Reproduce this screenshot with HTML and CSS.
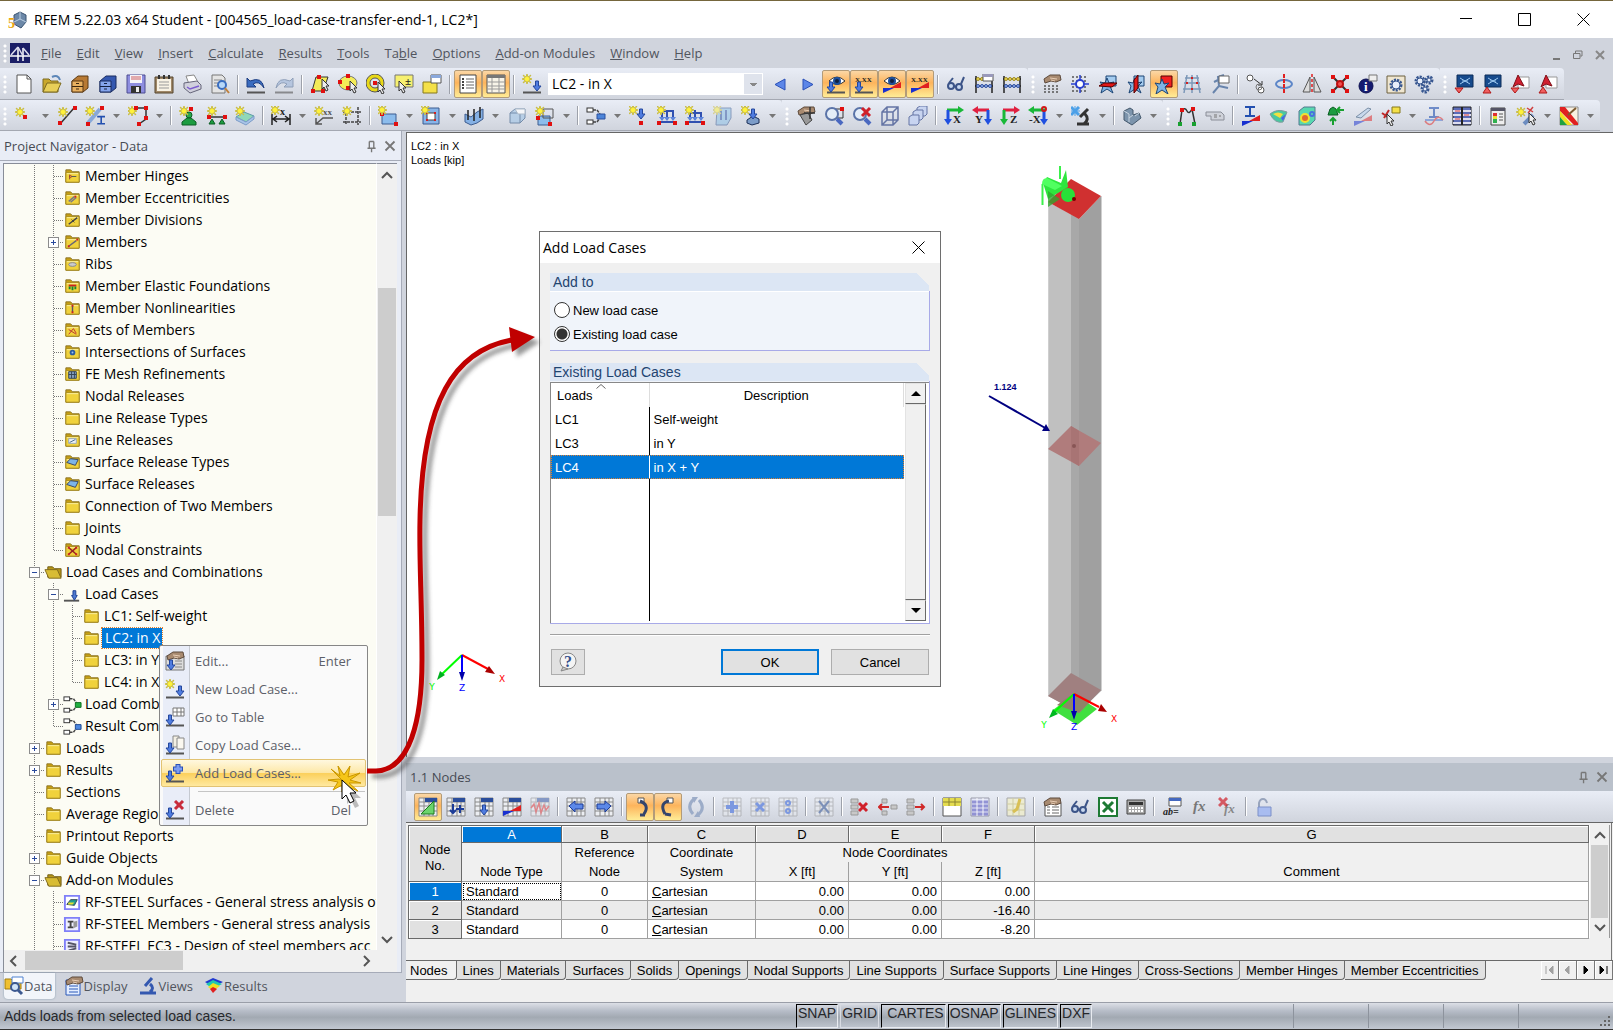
FILE: index.html
```html
<!DOCTYPE html>
<html lang="en">
<head>
  <meta charset="UTF-8">
  <meta name="viewport" content="width=device-width, initial-scale=1.0">
  <title>RFEM 5.22.03 x64 Student</title>
  <link rel="stylesheet" href="styles.css">
</head>
<body>
  <header class="title-bar">
    <span data-icon="app"></span>
    <h1>RFEM 5.22.03 x64 Student - [004565_load-case-transfer-end-1, LC2*]</h1>
    <div class="window-buttons">
      <button aria-label="Minimize"><svg width="12" height="12"><path d="M0 5.5H12" stroke="#000"/></svg></button>
      <button aria-label="Maximize"><svg width="13" height="13"><path d="M.5.5H12.500V12.500H.5Z" fill="none" stroke="#000"/></svg></button>
      <button aria-label="Close"><svg width="13" height="13"><path d="M.5.5 12.500 12.500M12.500.5.5 12.500" stroke="#000"/></svg></button>
    </div>
  </header>

  <nav class="menu-bar">
    <i class="grip"></i>
    <span data-icon="logo"></span>
    <button><u>F</u>ile</button>
    <button><u>E</u>dit</button>
    <button><u>V</u>iew</button>
    <button><u>I</u>nsert</button>
    <button><u>C</u>alculate</button>
    <button><u>R</u>esults</button>
    <button><u>T</u>ools</button>
    <button>Ta<u>b</u>le</button>
    <button><u>O</u>ptions</button>
    <button><u>A</u>dd-on Modules</button>
    <button><u>W</u>indow</button>
    <button><u>H</u>elp</button>
    <div class="mdi-buttons">
      <button aria-label="Minimize drawing"><svg width="8" height="12"><path d="M0 10H7" stroke="#777" stroke-width="2"/></svg></button>
      <button aria-label="Restore drawing"><svg width="10" height="10"><path d="M2.500 3V1H9V6H7.500M.5 3.500H7V8.500H.5Z" fill="none" stroke="#777"/></svg></button>
      <button aria-label="Close drawing"><svg width="10" height="10"><path d="M1 1 9 9M9 1 1 9" stroke="#888" stroke-width="2"/></svg></button>
    </div>
  </nav>

  <!-- "|" separator, "*" pressed, "+" has a drop-down arrow -->
  <div class="toolbar-row">
    <div class="toolbar" data-buttons="new open cabinetBrown cabinetBlue save clipboard print preview | undo redo | pickPlane pickEllipse pickRing pickBox pickWindow | *navigator *tables | newLoad">
      <select class="load-case" aria-label="Load case"><option>LC2 - in X</option></select>
      <div class="more" data-buttons="prev next *eyeLoad *xxLoad *eyeResult *xxResult | glasses abacusWindow abacus"></div>
    </div>
    <div class="toolbar" data-buttons="handGrid snapGrid planeXY planeYZ *planeXZ gridLines tree3d | copyMove rotate mirror nodeCross info gearBox gears"></div>
    <div class="toolbar" data-buttons="dlubalDown dlubalUp pdfDown pdfUp"></div>
  </div>
  <div class="toolbar-row">
    <div class="toolbar" data-buttons="+newNode newLine +newMember +newPolyline | newSupport newLineSupport newFoundation | +dimension comment guideFrame | +newSurface +opening +surfaceLoad solid +newSolid | +combine nodeLoad memberLoad lineLoad areaLoad +freeLoad"></div>
    <div class="toolbar" data-buttons="handMove zoomWindow zoomOff wireBox boxes | viewX viewY viewZ +viewMinusX +microscope | +render"></div>
    <div class="toolbar" data-buttons="deformed print3d | sectionResult surfaceResult solidResult supportForce sectionCut +pickValue momentLine valueTable | legend +wizard +colors"></div>
  </div>

  <main class="workspace">
    <aside class="navigator">
      <div class="pane-title">
        <h2>Project Navigator - Data</h2>
        <button aria-label="Pin" data-icon="pin"></button>
        <button aria-label="Close navigator" data-icon="close"></button>
      </div>
      <div class="tree-box">
        <ul class="tree" id="tree"></ul>
        <div class="scroll-v">
          <i data-icon="up"></i><div class="thumb"></div><i data-icon="down"></i>
        </div>
        <div class="scroll-h">
          <i data-icon="left"></i><div class="thumb"></div><i data-icon="right"></i>
        </div>
      </div>
      <div class="navigator-tabs">
        <button class="selected"><span data-icon="tabData"></span>Data</button>
        <button><span data-icon="tabDisplay"></span>Display</button>
        <button><span data-icon="tabViews"></span>Views</button>
        <button><span data-icon="tabResults"></span>Results</button>
      </div>
    </aside>

    <div class="right-side">
      <section class="viewport">
        <p>LC2 : in X<br>Loads [kip]</p>
        <svg class="model" width="100%" height="100%">
          <!-- base support -->
          <path d="M646 577 667 561 690 576 670 592Z" fill="#3fe03f"/>
          <!-- column -->
          <path d="M641 69V563L672 579V85Z" fill="#c0c0c0"/>
          <path d="M664 60H672V579L664 574Z" fill="#a8a8a8"/>
          <path d="M672 86 694 63V558L672 579Z" fill="#a0a0a0"/>
          <path d="M641.500 69V563M694.500 63V558" stroke="#cfcfcf"/>
          <path d="M641 69 664 46 694 63 672 86Z" fill="#d03030"/>
          <path d="M641 316 664 293 694 310 672 333Z" fill="#b07c7c"/>
          <path d="M664 293 672 298V333L664 328Z" fill="#a87474"/>
          <path d="M641 563 664 540 694 557 672 580Z" fill="#a08080"/>
          <path d="M650 572 667 560 684 568 672 580Z" fill="#8f8468"/>
          <circle cx="667" cy="313" r="2" fill="#855"/>
          <!-- hinge at the top -->
          <path d="M635.500 72V51M653 46V33" stroke="#3bf04b" stroke-width="2"/>
          <path d="M636 50 640 44 654 50 659 37 661 54 641 66Z" fill="#2ee63e"/>
          <path d="M641 58V74L653 66Z" fill="#30a830" opacity=".8"/>
          <path d="M640 45Q635 45 635 51L648 57 655 53Z" fill="#50ff60"/>
          <circle cx="661" cy="62" r="7" fill="#28e038"/>
          <circle cx="667" cy="66" r="2" fill="#700"/>
          <!-- local axes at the base -->
          <path d="M667 561 645 581" stroke="#0f0" stroke-width="2"/>
          <path d="M642 585 646 576 651 581Z" fill="#00b820"/>
          <path d="M667 561 692 574" stroke="red" stroke-width="2"/>
          <path d="M700 579 691 578 694 571Z" fill="#a00"/>
          <path d="M667 561V580" stroke="#00f" stroke-width="2"/>
          <path d="M664 578H670L667 587Z" fill="#00a"/>
          <!-- load -->
          <path d="M582 263 640 296" stroke="#000080" stroke-width="2"/>
          <path d="M643 298 635 298 639 291Z" fill="#000080"/>
          <text class="load-value" x="587" y="257">1.124</text>
          <!-- global axes -->
          <path d="M55 522 34 542" stroke="#0f0" stroke-width="2"/>
          <path d="M30 547 33 538 38 542Z" fill="#00b020"/>
          <path d="M55 522 81 536" stroke="red" stroke-width="2"/>
          <path d="M88 541 78 539 82 533Z" fill="#a00"/>
          <path d="M55 522V541" stroke="#00f" stroke-width="2"/>
          <path d="M52 539H58L55 548Z" fill="#00a"/>
          <g class="axis-label">
            <text x="95" y="549" fill="red">X</text>
            <text x="25" y="557" fill="#0f0">Y</text>
            <text x="55" y="558" fill="#00f">Z</text>
            <text x="707" y="589" fill="red">X</text>
            <text x="637" y="595" fill="#0f0">Y</text>
            <text x="667" y="597" fill="#00f">Z</text>
          </g>
        </svg>
      </section>

      <section class="table-pane">
        <div class="pane-title">
          <h2>1.1 Nodes</h2>
          <button aria-label="Pin" data-icon="pin"></button>
          <button aria-label="Close table" data-icon="close"></button>
        </div>
        <div class="toolbar" data-buttons="*gridEdit gridLoad gridDown gridResult gridWave | gridLeft gridRight | *jumpDown *jumpUp refresh | gridPlus gridTimes gridDots | gridX | rowDelete rowInsert rowOut | gridYellow gridBlue | gridNote | handList glasses excel calculator | abWindow fx fxDelete | lock"></div>
        <div class="sheet">
          <table>
            <colgroup>
              <col class="col-no"><col class="col-a"><col class="col-b"><col class="col-c">
              <col class="col-xyz"><col class="col-xyz"><col class="col-xyz"><col>
            </colgroup>
            <thead>
              <tr class="letters">
                <th rowspan="3" class="corner">Node<br>No.</th>
                <th class="active">A</th><th>B</th><th>C</th><th>D</th><th>E</th><th>F</th><th>G</th>
              </tr>
              <tr class="names">
                <th></th><th>Reference</th><th>Coordinate</th><th colspan="3">Node Coordinates</th><th></th>
              </tr>
              <tr class="names last">
                <th>Node Type</th><th>Node</th><th>System</th><th>X [ft]</th><th>Y [ft]</th><th>Z [ft]</th><th>Comment</th>
              </tr>
            </thead>
            <tbody>
              <tr><th class="active">1</th><td class="focus">Standard</td><td class="mid">0</td><td><u>C</u>artesian</td><td class="num">0.00</td><td class="num">0.00</td><td class="num">0.00</td><td></td></tr>
              <tr><th>2</th><td>Standard</td><td class="mid">0</td><td><u>C</u>artesian</td><td class="num">0.00</td><td class="num">0.00</td><td class="num">-16.40</td><td></td></tr>
              <tr><th>3</th><td>Standard</td><td class="mid">0</td><td><u>C</u>artesian</td><td class="num">0.00</td><td class="num">0.00</td><td class="num">-8.20</td><td></td></tr>
            </tbody>
          </table>
          <div class="scroll-v">
            <i data-icon="up"></i><div class="thumb"></div><i data-icon="down"></i>
          </div>
        </div>
        <div class="sheet-tabs">
          <button class="selected">Nodes</button>
          <button>Lines</button>
          <button>Materials</button>
          <button>Surfaces</button>
          <button>Solids</button>
          <button>Openings</button>
          <button>Nodal Supports</button>
          <button>Line Supports</button>
          <button>Surface Supports</button>
          <button>Line Hinges</button>
          <button>Cross-Sections</button>
          <button>Member Hinges</button>
          <button>Member Eccentricities</button>
          <div class="tab-arrows">
            <button aria-label="First tab" disabled><svg width="9" height="8"><path d="M1 0V8M8 0V8L4 4Z"/></svg></button>
            <button aria-label="Previous tab" disabled><svg width="9" height="8"><path d="M6 0V8L2 4Z"/></svg></button>
            <button aria-label="Next tab"><svg width="9" height="8"><path d="M3 0V8L7 4Z"/></svg></button>
            <button aria-label="Last tab"><svg width="9" height="8"><path d="M8 0V8M1 0V8L5 4Z"/></svg></button>
          </div>
        </div>
      </section>
    </div>
  </main>

  <footer class="status-bar">
    <span class="hint">Adds loads from selected load cases.</span>
    <div class="modes">
      <button>SNAP</button>
      <button class="off">GRID</button>
      <button class="wide">CARTES</button>
      <button>OSNAP</button>
      <button>GLINES</button>
      <button>DXF</button>
    </div>
    <div class="cells"><i></i><i></i><i></i><i></i></div>
    <svg class="resize" width="12" height="12"><path d="M9 1h2M5 5h2M9 5h2M1 9h2M5 9h2M9 9h2" stroke="#666" stroke-width="2"/></svg>
  </footer>

  <div class="dialog" role="dialog" aria-labelledby="dialog-title">
    <div class="dialog-title">
      <h2 id="dialog-title">Add Load Cases</h2>
      <button aria-label="Close"><svg width="13" height="13"><path d="M.5.5 12.500 12.500M12.500.5.5 12.500" stroke="#000"/></svg></button>
    </div>
    <div class="dialog-body">
      <section class="group">
        <h3>Add to</h3>
        <div class="radios">
          <label><input type="radio" name="target">New load case</label>
          <label><input type="radio" name="target" checked>Existing load case</label>
        </div>
      </section>
      <section class="group">
        <h3>Existing Load Cases</h3>
        <div class="case-list">
          <div class="case-table">
            <table>
              <thead><tr><th>Loads<svg width="10" height="5"><path d="M.5 4.500 5 .5 9.500 4.500" fill="none" stroke="#666"/></svg></th><th>Description</th></tr></thead>
              <tbody>
                <tr><td>LC1</td><td>Self-weight</td></tr>
                <tr><td>LC3</td><td>in Y</td></tr>
                <tr class="selected"><td>LC4</td><td>in X + Y</td></tr>
                <tr class="rest"><td></td><td></td></tr>
              </tbody>
            </table>
          </div>
          <div class="scroll-classic">
            <button aria-label="Scroll up"><svg width="10" height="5"><path d="M0 5 5 0 10 5Z"/></svg></button>
            <div class="thumb"></div>
            <button aria-label="Scroll down"><svg width="10" height="5"><path d="M0 0H10L5 5Z"/></svg></button>
          </div>
        </div>
      </section>
      <div class="dialog-buttons">
        <button class="help" aria-label="Help" data-icon="help"></button>
        <button class="default">OK</button>
        <button>Cancel</button>
      </div>
    </div>
  </div>

  <div class="context-menu" role="menu">
    <button role="menuitem"><span data-icon="menuEdit"></span>Edit...<kbd>Enter</kbd></button>
    <button role="menuitem"><span data-icon="newLoad"></span>New Load Case...</button>
    <button role="menuitem"><span data-icon="menuTable"></span>Go to Table</button>
    <button role="menuitem"><span data-icon="menuCopy"></span>Copy Load Case...</button>
    <button role="menuitem" class="hover"><span data-icon="menuAdd"></span>Add Load Cases...</button>
    <hr>
    <button role="menuitem"><span data-icon="menuDelete"></span>Delete<kbd>Del</kbd></button>
    <svg class="pointer" width="46" height="46">
      <path d="M15 16 3 4 12 11 10 1 16 10 22 1 20 12 32 8 22 15 33 18 21 18 30 26 18 21 14 27 14 20 5 25 10 17 0 15 11 14Z" fill="#f5c518" stroke="#c99700"/>
      <path d="M17 18V37L21 33 25 41 29 39 25 31H31Z" fill="#000" opacity=".25" transform="translate(2 2)"/>
      <path d="M14 15V34L18 30 22 38 26 36 22 28H28Z" fill="#fff" stroke="#000"/>
    </svg>
  </div>

  <svg class="callout" width="100%" height="100%">
    <defs><filter id="soft"><feGaussianBlur stdDeviation="2"/></filter></defs>
    <g transform="translate(5 5)" opacity=".5" filter="url(#soft)">
      <path d="M367 771H376C410 770 422 720 422 660C422 600 419 560 420 520C422 400 455 350 512 340" fill="none" stroke="#333" stroke-width="5"/>
      <path d="M509 327 535 337 512 352Z" fill="#333"/>
    </g>
    <path d="M367 771H376C410 770 422 720 422 660C422 600 419 560 420 520C422 400 455 350 512 340" fill="none" stroke="#c00000" stroke-width="5"/>
    <path d="M509 327 535 337 512 352Z" fill="#c00000"/>
  </svg>

  <script src="script.js"></script>
</body>
</html>
```
FILE: styles.css
```css
* {
  box-sizing: border-box;
}
body {
  margin: 0;
  height: 100vh;
  display: flex;
  flex-direction: column;
  overflow: hidden;
  position: relative;
  background: #d0d4dd;
  color: #000;
  font-family: "Open Sans", "Noto Sans", sans-serif;
  font-size: 14px;
}
button {
  padding: 0;
  border: none;
  background: none;
  color: inherit;
  font: inherit;
}
h1, h2, h3, p, ul {
  margin: 0;
  padding: 0;
  font-size: 14px;
  font-weight: normal;
}
svg {
  display: block;
}
[data-icon] {
  display: block;
  flex: none;
}

/* title and menu */
.title-bar {
  flex: none;
  height: 38px;
  display: flex;
  align-items: center;
  gap: 6px;
  padding-left: 8px;
  border-top: 1px solid #75663c;
  background: #fff;
}
.window-buttons {
  display: flex;
  margin-left: auto;
}
.window-buttons button {
  width: 59px;
  display: flex;
  justify-content: center;
}
.menu-bar {
  flex: none;
  height: 30px;
  display: flex;
  align-items: center;
  gap: 15px;
  padding-bottom: 1px;
  color: #51555e;
  font-size: 13px;
}
.menu-bar .grip {
  margin-right: -15px;
}
.menu-bar > [data-icon] {
  margin-right: -4px;
}
.mdi-buttons {
  display: flex;
  align-items: center;
  gap: 12px;
  margin: 4px 8px 0 auto;
}

/* toolbars */
.toolbar-row {
  flex: none;
  display: flex;
}
.toolbar {
  display: flex;
  align-items: center;
  height: 32px;
  padding: 1px 2px 0 0;
  border-bottom: 1px solid #a4a8b2;
  border-radius: 0 4px 0 0;
  background: linear-gradient(#e9edf6, #d0d4dd);
}
.toolbar-row + .toolbar-row .toolbar {
  height: 31px;
}
.more {
  display: flex;
  align-items: center;
}
.grip {
  width: 10px;
  height: 20px;
  flex: none;
  background: radial-gradient(circle at 5px 3px, #fff 1px, transparent 2px) 0 0 / 10px 5px;
}
.tool {
  width: 28px;
  height: 28px;
  flex: none;
  display: flex;
  align-items: center;
  justify-content: center;
  border: 1px solid transparent;
  border-radius: 2px;
}
.tool.pressed {
  border-color: #b39b78;
  background: linear-gradient(#fbd7a6, #fdb45c 45%, #ffec96);
}
.drop {
  width: 15px;
  height: 28px;
  flex: none;
  display: flex;
  align-items: center;
  justify-content: center;
}
.separator {
  width: 2px;
  height: 19px;
  flex: none;
  margin: 0 3px;
  border-left: 1px solid #9da1aa;
  background: #fff;
}
.load-case {
  width: 215px;
  height: 22px;
  margin: 0 3px 0 2px;
  padding: 0 3px;
  appearance: none;
  border: 1px solid #fff;
  border-radius: 0;
  color: #000;
  font: inherit;
  line-height: 20px;
  background:
    linear-gradient(#888, #888) right 5px top 9px / 7px 1px no-repeat,
    linear-gradient(#888, #888) right 6px top 10px / 5px 1px no-repeat,
    linear-gradient(#888, #888) right 7px top 11px / 3px 1px no-repeat,
    linear-gradient(#dfe3ec, #dfe3ec) right / 18px 100% no-repeat,
    #fff;
}

/* panes */
.workspace {
  flex: 1;
  min-height: 0;
  display: flex;
}
.pane-title {
  flex: none;
  height: 30px;
  display: flex;
  align-items: center;
  padding: 0 2px 0 4px;
  color: #474b54;
}
.pane-title h2 {
  flex: 1;
  font-size: 13px;
}
.pane-title svg {
  width: 18px;
  height: 18px;
}
.navigator {
  width: 402px;
  flex: none;
  display: flex;
  flex-direction: column;
  background: #d0d4dd;
}
.navigator .pane-title {
  border-right: 1px solid #a6abb8;
  border-bottom: 1px solid #a6abb8;
  background: #e9edf6;
}
.tree-box {
  flex: 1;
  min-height: 0;
  display: grid;
  grid-template-columns: 1fr 21px;
  grid-template-rows: 1fr 22px;
  padding: 2px 4px 0 3px;
  border: 1px solid #a6abb8;
  border-width: 0 1px 1px 0;
  background: #e9edf6;
}
.tree {
  overflow: hidden;
  padding: 1px 0 0 21px;
  border-top: 1px solid #888d98;
  border-left: 1px solid #888d98;
  background: #fcfcf4;
  list-style: none;
}
.tree li {
  height: 22px;
  display: flex;
  align-items: center;
  white-space: nowrap;
}
.tree svg {
  flex: none;
}
.tree .label {
  padding: 0 2px 0 3px;
  line-height: 20px;
}
.tree .selected {
  margin-left: 1px;
  outline: 1px dotted #e08030;
  background: #0078d7;
  color: #fff;
}
.scroll-v {
  display: flex;
  flex-direction: column;
  align-items: center;
  padding: 0 1px;
  border-left: 1px solid #fff;
  background: #f0f0f0;
}
.scroll-v .thumb {
  width: 100%;
  background: #cdcdcd;
}
.tree-box .scroll-v {
  padding-top: 1px;
  border-top: 1px solid #888d98;
}
.tree-box .scroll-v .thumb {
  height: 29%;
  margin: 103px 0 auto;
}
.scroll-h {
  grid-column: 1 / 3;
  display: flex;
  align-items: flex-start;
  padding: 1px 21px 2px 0;
  border-left: 1px solid #888d98;
  background: #f0f0f0;
}
.scroll-h .thumb {
  width: 158px;
  height: 19px;
  margin: 0 auto 0 1px;
  background: #cdcdcd;
}
.navigator-tabs {
  flex: none;
  height: 29px;
  display: flex;
  align-items: center;
  gap: 9px;
  padding: 0 4px 3px;
  color: #51555e;
  font-size: 13px;
}
.navigator-tabs button {
  height: 26px;
  display: flex;
  align-items: center;
  padding-right: 2px;
}
.navigator-tabs .selected {
  border-radius: 0 0 4px 4px;
  background: #f2f5fa;
  box-shadow: 0 0 2px #7f96a8;
}
.right-side {
  flex: 1;
  min-width: 0;
  display: flex;
  flex-direction: column;
  margin-left: 4px;
}
.viewport {
  flex: 1;
  min-height: 0;
  position: relative;
  margin-top: 1px;
  border: 1px solid #666;
  border-width: 1px 0 0 1px;
  background: #fff;
}
.viewport p {
  padding: 6px 4px;
  font: 11px/14px "Liberation Sans", Arial, sans-serif;
}
.model {
  position: absolute;
  left: 0;
  top: 0;
}
.load-value {
  font: bold 9px "Liberation Sans", sans-serif;
  fill: #000080;
}
.axis-label {
  font: 9px "DejaVu Sans", sans-serif;
  text-anchor: middle;
}

/* table pane */
.table-pane {
  flex: none;
  height: 245px;
  display: flex;
  flex-direction: column;
  border-top: 6px solid #d0d4dd;
  background: #f0f0f0;
  font-family: "Liberation Sans", Arial, sans-serif;
  font-size: 13px;
}
.table-pane .pane-title {
  height: 28px;
  background: #bac1cb;
  font-family: "Open Sans", "Noto Sans", sans-serif;
}
.table-pane .toolbar {
  padding: 0 0 0 8px;
  border-bottom: 1px solid #666;
  border-radius: 0;
}
.table-pane .toolbar .grip {
  display: none;
}
.sheet {
  flex: 1;
  display: flex;
  align-items: flex-start;
  margin: 0 1px;
  padding: 2px 1px;
  border-right: 1px solid #777;
}
.sheet table {
  flex: 1;
  min-width: 0;
  table-layout: fixed;
  border-collapse: collapse;
  line-height: 15px;
}
.col-no { width: 53px; }
.col-a { width: 100px; }
.col-b { width: 86px; }
.col-c { width: 108px; }
.col-xyz { width: 93px; }
.sheet th,
.sheet td {
  padding: 0 4px;
  border: 1px solid #a0a0a0;
  font-weight: normal;
}
.sheet td {
  height: 19px;
  background: #fff;
}
.sheet tr:nth-child(2) td {
  background: #ebebeb;
}
.sheet tbody th,
.letters th {
  border: 1px solid #696969;
  background: #e1e1e1;
  box-shadow: inset 1px 1px #fff;
}
.letters th {
  height: 17px;
}
.sheet .corner {
  padding-top: 8px;
  line-height: 16px;
}
.sheet th.active {
  background: #0078d7;
  color: #fff;
}
.names th {
  height: 19px;
  border-top: none;
  border-bottom: none;
}
.names.last th {
  height: 20px;
  border-bottom: 1px solid #a0a0a0;
}
.sheet .focus {
  outline: 1px dotted #000;
  outline-offset: -2px;
}
.mid {
  text-align: center;
}
.num {
  text-align: right;
}
.sheet .scroll-v {
  width: 21px;
  height: 113px;
  border-right: 1px solid #999;
}
.sheet .scroll-v .thumb {
  flex: 1;
}
.sheet-tabs {
  flex: none;
  height: 42px;
  display: flex;
  align-items: flex-start;
  border-top: 1px solid #696969;
}
.sheet-tabs > button {
  height: 19px;
  padding: 0 6px;
  border: 1px solid #696969;
  border-width: 0 1px 1px 0;
  border-radius: 0 0 4px 0;
  background: #e1e1e1;
  white-space: nowrap;
}
.sheet-tabs > .selected {
  padding: 0 8px 0 4px;
  background: #f0f0f0;
}
.tab-arrows {
  display: flex;
  margin-left: auto;
}
.tab-arrows button {
  width: 18px;
  height: 19px;
  display: flex;
  align-items: center;
  justify-content: center;
  border: 1px solid #777;
  border-width: 0 1px 1px 0;
  box-shadow: inset 1px 1px #fff;
}
.tab-arrows path {
  fill: #000;
  stroke: #000;
}
.tab-arrows :disabled path {
  fill: #a0a0a0;
  stroke: #a0a0a0;
}

/* status bar */
.status-bar {
  flex: none;
  height: 28px;
  display: flex;
  align-items: center;
  position: relative;
  padding-left: 4px;
  border-top: 1px solid #9a9ea8;
  border-bottom: 1px solid #333;
  background: linear-gradient(#dcdfe6, #b7bdc8 30%, #a2a9b2 55%, #c2c8d2);
  color: #26282c;
  font-family: "Liberation Sans", Arial, sans-serif;
}
.hint {
  width: 792px;
}
.modes {
  display: flex;
  gap: 2px;
  height: 24px;
}
.modes button {
  padding: 0 1px 6px;
  border: 1px solid #000;
  border-color: #000 #e8ebf0 #e8ebf0 #000;
}
.modes .off {
  border-color: #d8dbe2;
}
.modes .wide {
  padding-left: 5px;
}
.cells {
  flex: 1;
  height: 24px;
  display: flex;
  justify-content: flex-end;
  padding-right: 20px;
}
.cells i {
  width: 75px;
  border-left: 1px solid #8d939d;
}
.resize {
  position: absolute;
  right: 2px;
  bottom: 1px;
}

/* dialog */
.dialog {
  position: absolute;
  left: 539px;
  top: 231px;
  width: 402px;
  border: 1px solid #6e6e6e;
  background: #f0f0f0;
  font: 13px "Liberation Sans", Arial, sans-serif;
}
.dialog-title {
  height: 31px;
  display: flex;
  align-items: center;
  justify-content: space-between;
  padding: 0 15px 0 3px;
  background: #fff;
  font-family: "Open Sans", "Noto Sans", sans-serif;
}
.dialog-body {
  padding: 10px;
}
.group {
  margin-bottom: 12px;
  border-right: 1px solid #a8aae8;
  border-bottom: 1px solid #a8aae8;
  background: #f0f4fa;
}
.group h3 {
  height: 18px;
  padding-left: 3px;
  margin-right: -1px;
  border-right: 1px solid #f0f0f0;
  background: linear-gradient(225deg, #f0f0f0 9px, #dce6f4 9px);
  color: #1f4470;
  line-height: 18px;
}
.radios {
  padding: 6px 4px 4px;
  border-top: 1px solid #fff;
}
.radios label {
  height: 24px;
  display: flex;
  align-items: center;
  gap: 3px;
}
.radios input {
  width: 16px;
  height: 16px;
  margin: 0;
  appearance: none;
  border: 1px solid #333;
  border-radius: 50%;
  background: #fff;
}
.radios input:checked {
  background: radial-gradient(circle, #333 5px, #fff 6px);
}
.case-list {
  height: 241px;
  display: flex;
  justify-content: space-between;
  margin-top: 1px;
  padding: 0 3px 2px 0;
  border-top: 1px solid #888;
  border-left: 1px solid #888;
  background: #fff;
}
.case-table {
  flex: 1;
  display: flex;
}
.case-table table {
  width: 100%;
  height: 100%;
  table-layout: fixed;
  border-collapse: collapse;
}
.case-table th {
  position: relative;
  height: 24px;
  padding: 0;
  border-right: 1px solid #ddd;
  font-weight: normal;
}
.case-table th:first-child {
  width: 98px;
  padding-left: 6px;
  text-align: left;
}
.case-table th svg {
  position: absolute;
  left: 45px;
  top: 1px;
}
.case-table td {
  height: 24px;
  padding: 0 4px;
}
.case-table td:first-child {
  border-right: 1px solid #000;
}
.case-table .selected {
  outline: 1px dotted #e08030;
  outline-offset: -1px;
  background: #0078d7;
  color: #fff;
}
.case-table .selected td:first-child {
  border-color: #fff;
}
.case-table .rest td {
  height: auto;
}
.scroll-classic {
  width: 21px;
  display: flex;
  flex-direction: column;
  margin-left: 1px;
}
.scroll-classic .thumb {
  flex: 1;
}
.scroll-classic button {
  height: 21px;
  display: flex;
  align-items: center;
  justify-content: center;
}
.scroll-classic button,
.scroll-classic .thumb {
  border: 1px solid #777;
  border-color: #e3e3e3 #696969 #696969 #e3e3e3;
  background: #f0f0f0;
}
.dialog-buttons {
  display: flex;
  gap: 12px;
  margin-top: -2px;
  padding: 14px 1px 1px;
  border-top: 1px solid #a0a0a0;
  box-shadow: inset 0 1px #fff;
}
.dialog-buttons button {
  width: 98px;
  height: 26px;
  border: 1px solid #adadad;
  background: #e1e1e1;
}
.dialog-buttons .default {
  border: 2px solid #0078d7;
}
.dialog-buttons .help {
  width: 34px;
  display: flex;
  align-items: center;
  justify-content: center;
  margin-right: auto;
}

/* context menu */
.context-menu {
  position: absolute;
  left: 159px;
  top: 645px;
  width: 209px;
  padding: 1px;
  border: 1px solid #868686;
  border-radius: 2px;
  background: linear-gradient(90deg, #fafafa 3px, #e9edf8 3px, #e9edf8 29px, #c5c9d1 29px, #c5c9d1 30px, #fafafa 30px);
  color: #5c6069;
  font-size: 13px;
}
.context-menu > button {
  width: 100%;
  height: 28px;
  display: flex;
  align-items: center;
  gap: 10px;
  padding: 0 14px 0 3px;
  border: 1px solid transparent;
  border-radius: 2px;
}
.context-menu .hover {
  border-color: #e2c373;
  background: linear-gradient(#fff8e0, #fde8a8 48%, #fbd05c 52%, #ffe9a0);
}
.context-menu kbd {
  margin-left: auto;
  font: inherit;
}
.context-menu hr {
  height: 1px;
  margin: 4px 1px 4px 37px;
  border: none;
  background: #c5c5c5;
}
.pointer {
  position: absolute;
  left: 168px;
  top: 119px;
}
.callout {
  position: absolute;
  left: 0;
  top: 0;
  pointer-events: none;
}
```
FILE: script.js
```js
// Small pieces that many icons share
const at = (x, y, body) => `<g transform="translate(${x} ${y})">${body}</g>`;
const line = (d, color = "#333", width = 1.5) => `<path d="${d}" fill="none" stroke="${color}" stroke-width="${width}"/>`;
const shape = (d, fill, stroke = "none") => `<path d="${d}" fill="${fill}" stroke="${stroke}"/>`;
const star = (x, y) => at(x, y, shape("M0-5 1-2 4-4 2-1 5 0 2 1 4 4 1 2 0 5-1 2-4 4-2 1-5 0-2-1-4-4-1-2Z", "#fff23a", "#c9bd48"));
const dot = (x, y, c = "#e01010") => `<rect x="${x - 2}" y="${y - 2}" width="4" height="4" fill="${c}"/>`;
const mark = (x, y) => `<rect x="${x - 1}" y="${y - 1}" width="2" height="2" fill="#d02020"/>`;
const ring = (x, y, r, c, w = 1.5, fill = "none") => `<circle cx="${x}" cy="${y}" r="${r}" fill="${fill}" stroke="${c}" stroke-width="${w}"/>`;
const text = (x, y, s, size = 9, c = "#222", style = "") => `<text x="${x}" y="${y}" font-family="Liberation Serif" font-weight="bold" font-size="${size}" fill="${c}" ${style}>${s}</text>`;
const arrowDown = (x, y) => at(x, y, shape("M-1.500-9H1.500V-4H4L0 1-4-4H-1.500Z", "#4f7ce0", "#24479c"));
const pointer = (x, y) => at(x, y, shape("M0 0V10L2 8 4 12 6 11 4 7H7Z", "#eee", "#333"));
const hand = shape("M2 5 8 1 18 1 19 6 14 8 9 7 3 9Z", "#a88a70", "#5d4a3c") + line("M8 4 15 5M9 6 13 7", "#e8cdb4", 1);
const grid = shape("M1 1H19V19H1Z", "#eceef2") + line("M1 1H19V19H1ZM1 5H19M1 9H19M1 14H19M6 1V19M11 1V19M15 1V19", "#888", 1);
const gridTop = grid + shape("M7 1H19V5H7Z", "#2a4d9c");
const cross = (x, y, c = "#d0202a") => at(x, y, line("M-4-4 4 4M4-4-4 4", c, 3));
const base = line("M1 18.500H19", "#555", 2);
const slope = shape("M1 13H12L1 18Z", "#1830d0") + shape("M8 13H19V7Z", "#e02020");
const eye = shape("M2 6Q10-2 18 6Q10 13 2 6Z", "#fff", "#333") + ring(10, 6, 3, "#1c4f9c", 2, "#102040");
const cube = shape("M3 7 8 3H18V12L13 17H3Z", "#a9c8e6", "#4a6a90") + line("M3 7H13V17M13 7 18 3", "#4a6a90", 1);
const lens = ring(8, 8, 6, "#5a73a8", 2, "#e4edf8") + line("M13 13 18 18", "#4a68c0", 4);
const ibeam = line("M4 2H14M4 11H14M9 2V11", "#2350b0", 2);
const star4 = shape("M3 7 8 8 10 3 12 8 17 7 13 11 16 18 10 14 4 18 6 11Z", "#7fb4e4", "#1c4474");
const plane = shape("M8 2H18V12H8Z", "#a4ccf0", "#1c4474") + at(-1, 1, star4);
const abacus = line("M2 19V2M18 19V2M1 5H19M1 12H19", "#222", 1.5) + [4, 8, 12, 16].map(x => ring(x, 5, 1.5, "#a08c20", 1, "#f3e060") + ring(x, 12, 1.5, "#3050a0", 1, "#90b0f0")).join("");
const combineLines = line("M7 4H11L14 8M7 16H11L14 12", "#444", "1.5\" stroke-dasharray=\"3 1") + `<rect x="1" y="2" width="6" height="4" fill="#fff" stroke="#333"/><rect x="1" y="14" width="6" height="4" fill="#fff" stroke="#333"/>`;
const view = (name, h, v, x, tx) => line("M3 4H17", h, 3) + line(`M${x} 4V16`, v, 3) + shape(`M${x - 4} 13H${x + 4}L${x} 19Z`, v) + (x < 10 ? shape("M14 0V8L20 4Z", h) : shape("M6 0V8L0 4Z", h)) + text(tx, 17, name, 11);
const gear = (x, y, r) => `<circle cx="${x}" cy="${y}" r="${r}" fill="#c8d6f0" stroke="#37568f" stroke-width="3" stroke-dasharray="2 1"/><circle cx="${x}" cy="${y}" r="${r - 1}" fill="#e8eefa" stroke="#37568f"/>`;
const screen = shape("M3 1H19V13H3Z", "#164a8c", "#0c2c58") + line("M6 4 16 10M16 4 6 10M8 7H14", "#9cc8f0", 1);
const pdf = shape("M8 3H19V14H8Z", "#fff", "#999") + shape("M8 1 3 13 8 10 14 12Z", "#d02030", "#801018");
const gridFaded = `<g opacity=".45">${grid}</g>`;
const rows = shape("M1 2H8V6H1ZM1 8H8V12H1ZM1 14H8V18H1Z", "#c8c8c8", "#999");

const icons = {
  app: shape("M6 5 12 2 18 5V12L13 18 6 14Z", "#6c88a8", "#3a5472") + line("M12 2V9L6 12M12 9 18 12", "#bcd0e4", 1) + text(0, 18, "5", 14, "#e8a810"),
  logo: shape("M0 0H20V20H0Z", "#1b1e66") + line("M0 13H20M8 4V18M13 5V18", "#fff", 1.5) + line("M8 4 1 12M8 4 13 13M13 5 19 12", "#dde", 1.5),
  pin: line("M7 5V12M12 5V12M7 5H12M5 12.500H14M9.500 12V17", "#777"),
  close: line("M5 5 15 15M15 5 5 15", "#777", 2),
  up: line("M5 13 10 8 15 13", "#555", 2), down: line("M5 7 10 12 15 7", "#555", 2),
  left: line("M12 5 7 10 12 15", "#555", 2), right: line("M8 5 13 10 8 15", "#555", 2),

  new: shape("M3 1H13L17 5V19H3Z", "#fff", "#555") + line("M13 1V5H17", "#555", 1),
  open: shape("M1 5H7L9 7H16V18H1Z", "#c9a82c", "#7c6a20") + shape("M1 18 5 9H19L15 18Z", "#e8cf58", "#7c6a20") + line("M10 3Q16 0 18 6", "#5c86b8", 2),
  cabinetBrown: shape("M2 7 8 2H18V14L13 18H2Z", "#b87a34", "#5c3a14") + shape("M2 7H13V18H2Z", "#e8b060", "#5c3a14") + line("M2 12.500H13M6 9.500H9M6 15H9", "#3c2810", 1),
  cabinetBlue: shape("M2 7 8 2H18V14L13 18H2Z", "#3458b0", "#1a2c60") + shape("M2 7H13V18H2Z", "#84a4ec", "#1a2c60") + line("M2 12.500H13M6 9.500H9M6 15H9", "#142040", 1),
  save: shape("M1 1H19V19H1Z", "#8e8ee0", "#4c4c90") + shape("M4 1H16V9H4Z", "#f4f4fa") + line("M5 3H15M5 5H15", "#d06060", 1) + shape("M5 12H15V19H5Z", "#333") + shape("M10 13H13V18H10Z", "#eee"),
  clipboard: shape("M1 3H19V19H1Z", "#a08868", "#54442c") + shape("M3 5H17V17H3Z", "#f8f2e4") + line("M5 8H15M5 11H15M5 14H15", "#999", 1) + line("M5 1V5M10 1V5M15 1V5", "#333", 2),
  print: shape("M4 2 12 1 16 8 7 10Z", "#fff", "#888") + shape("M2 9 15 7 19 11V15L8 19 2 14Z", "#d0d0dc", "#66667a") + line("M5 13 8 15 17 12", "#7c5cd0", 1.5),
  preview: shape("M2 1H12L15 4V19H2Z", "#e4e4e4", "#777") + line("M4 6H12M4 9H9M4 12H8", "#888", 1) + ring(12, 11, 4, "#3a6ec0", 2, "#b8d8f8") + line("M15 14 19 19", "#c0803c", 2),
  undo: base + shape("M1 4V13H10L7 10Q13 6 18 14Q16 2 4 7Z", "#3a6cc0", "#1c3c80"),
  redo: `<g opacity=".6">${base}${shape("M19 4V13H10L13 10Q7 6 2 14Q4 2 16 7Z", "#9cb4d8", "#5c7498")}</g>`,
  pickPlane: shape("M6 3H18L13 17H2Z", "#f4ec58", "#333") + dot(9, 3) + dot(3, 17) + dot(13, 17) + pointer(12, 5),
  pickEllipse: `<ellipse cx="10" cy="9" rx="9" ry="7" fill="#f4ec58" stroke="#777"/>` + dot(2, 8) + dot(10, 2) + dot(10, 14) + pointer(12, 7),
  pickRing: ring(9, 9, 7, "#e8d818", 4) + ring(9, 9, 9, "#555", 1) + ring(9, 9, 5, "#555", 1) + dot(9, 9) + pointer(12, 8),
  pickBox: shape("M1 1H19V13H1Z", "#f6f070", "#777") + text(11, 11, "±", 11) + pointer(5, 7),
  pickWindow: shape("M1 8H15V19H1Z", "#f4e048", "#85781c") + shape("M9 1H19V9H9Z", "#fff", "#555") + shape("M9 1H19V4H9Z", "#8aa8dc"),
  navigator: shape("M2 1H18V19H2Z", "#fff", "#444") + line("M4 5H6M4 8H6M4 11H6M4 14H6", "#444", 2) + line("M8 5H16M8 8H16M8 11H16M8 14H16", "#666", 1),
  tables: shape("M1 1H19V19H1Z", "#f8f4e8", "#555") + shape("M1 1H19V4H1Z", "#777") + line("M1 8H19M1 12H19M1 15H19M6 4V19M13 4V19", "#999", 1),
  newLoad: base + star(5, 5) + arrowDown(15, 16),
  prev: shape("M15 5V16L5 10.500Z", "#5c86e8", "#2a50b8"),
  next: shape("M5 5V16L15 10.500Z", "#5c86e8", "#2a50b8"),
  eyeLoad: at(1, 1, eye) + base + arrowDown(5, 17),
  xxLoad: text(1, 8, "X.XX", 7) + base + arrowDown(5, 17),
  eyeResult: at(0, 1, eye) + at(0, 1, slope),
  xxResult: text(1, 8, "X.XX", 7) + at(0, 1, slope),
  glasses: ring(5, 12, 3, "#3c5488", 2, "#c8d8f0") + ring(13, 13, 3, "#3c5488", 2, "#c8d8f0") + line("M3 9 7 4M15 10 18 3M8 12 10 13", "#3c5488", 2),
  abacusWindow: abacus + shape("M9 0H19V7H9Z", "#fff", "#555") + shape("M9 0H19V3H9Z", "#99b"),
  abacus,
  handGrid: line("M2 12H18M2 15H18M2 18H18", "#555", "1.5\" stroke-dasharray=\"2 2") + hand,
  snapGrid: line("M2 3H18M2 7H18M2 13H18M2 17H18", "#555", "1.5\" stroke-dasharray=\"2 2") + line("M10 1V19M1 10H19", "#2a40d0") + ring(10, 10, 4, "#2a40d0", 2, "#fff"),
  planeXY: plane + shape("M1 12 6 9H19L14 13Z", "#e01818", "#500"),
  planeYZ: plane + shape("M8 6 12 1V14L8 19Z", "#e01818", "#500"),
  planeXZ: shape("M7 2H18V13H7Z", "#f02020", "#500") + at(-2, 2, star4),
  gridLines: line("M5 1 2 19M10 1V19M15 1 18 19M3 4H17M2 9H18M1 15H19", "#7c98b8", 1.5) + mark(5, 9) + mark(10, 15) + mark(15, 9) + mark(10, 4),
  tree3d: line("M3 19 9 12 8 3 14 1M9 12 18 14M8 6 4 8", "#6884ac", 2) + shape("M9 2H19V9H9Z", "#fff", "#666"),
  copyMove: ring(4, 4, 3, "#555", 1, "#fff") + ring(15, 16, 3, "#555", 1, "#fff") + line("M8 5 16 11M16 7V11H12", "#333", 1) + ring(13, 13, 3, "#777", 1),
  rotate: `<ellipse cx="10" cy="10" rx="8" ry="4" fill="none" stroke="#5c86c8" stroke-width="2"/>` + line("M10 0V20", "#e02020", "2\" stroke-dasharray=\"4 1"),
  mirror: shape("M8 3V18H1Z", "#ddd", "#555") + shape("M12 3V18H19Z", "#ddd", "#555") + line("M10 0V20", "#e02020", "1.5\" stroke-dasharray=\"3 2"),
  nodeCross: line("M2 2 18 18M18 2 2 18", "#333", 2) + dot(3, 3) + dot(17, 3) + dot(3, 17) + dot(17, 17) + ring(10, 10, 3, "#c01010", 2, "#f05050"),
  info: ring(8, 12, 7, "#0c1050", 1, "#141a70") + shape("M11 1H19V7H11Z", "#eee", "#777") + text(6, 17, "i", 13, "#fff"),
  gearBox: shape("M1 2H19V19H1Z", "#efe6d0", "#6c6040") + gear(10, 11, 5),
  gears: gear(6, 7, 4) + gear(15, 6, 3) + gear(11, 15, 3),
  dlubalDown: screen + shape("M1 14H9L5 19Z", "#f06060", "#b01818"),
  dlubalUp: screen + shape("M1 19H9L5 13Z", "#f06060", "#b01818"),
  pdfDown: pdf + shape("M1 14H9L5 19Z", "#f06060", "#b01818"),
  pdfUp: pdf + shape("M1 19H9L5 13Z", "#f06060", "#b01818"),

  newNode: star(6, 6) + dot(11, 11),
  newLine: line("M3 18 17 2") + star(6, 6) + dot(3, 17) + dot(18, 2),
  newMember: line("M3 17 15 3", "#88a8d8", 4) + star(5, 5) + dot(3, 18) + dot(17, 2) + at(9, 9, `<g transform="scale(.8)">${ibeam}</g>`),
  newPolyline: line("M8 2H18V13L11 18") + star(4, 5) + dot(8, 2) + dot(18, 2) + dot(18, 12) + dot(11, 18),
  newSupport: ring(10, 9, 3, "#0c5c24", 1, "#28a84c") + shape("M8 12H12L17 16V19H3V16Z", "#1c9c40", "#0c5c24") + dot(12, 3) + star(5, 5),
  newLineSupport: line("M2 11H18") + dot(2, 11) + dot(18, 11) + shape("M2 18 5 13 8 18ZM12 18 15 13 18 18Z", "#1c9c40", "#0c5c24") + star(5, 5),
  newFoundation: shape("M1 11 9 6 19 10 11 16Z", "#90d8b8", "#5c9ca8") + shape("M1 11V14L11 19 19 13V10L11 16Z", "#a8c4e8", "#7c9cc8") + star(5, 5),
  dimension: line("M1 8V19M19 8V19M2 13H18M6 10 2 13 6 16M14 10 18 13 14 16", "#222") + text(9, 9, "x", 10) + star(4, 4),
  comment: line("M2 18 9 12H19M2 12V18H8", "#555") + text(9, 9, "xx", 9, "#555") + star(5, 5),
  guideFrame: line("M1 6H19M1 16H19M4 3V19M16 1V19", "#444", "1.5\" stroke-dasharray=\"3 1") + star(5, 5),
  newSurface: shape("M4 8H18V18H4Z", "#8cbcec", "#3c5c90") + dot(4, 8) + dot(18, 18) + star(4, 4),
  opening: shape("M2 2H18V18H2Z", "#88b4e8", "#3c5c90") + shape("M6 7H14V14H6Z", "#fff", "#444") + mark(6, 7) + mark(14, 7) + mark(6, 14) + mark(14, 14) + star(4, 4),
  surfaceLoad: shape("M1 8 7 11 13 6 19 3V13L13 17 7 19 1 16Z", "#84b0e4", "#3c5c90") + line("M4 4V14M10 3V15M16 1V12", "#222"),
  solid: `<g opacity=".7">${cube}${shape("M8 3H18V8H11Z", "#fff", "#9ab")}</g>`,
  newSolid: shape("M3 10H15V19H3Z", "#8cbcec", "#3c5c90") + line("M8 3H18V12H8Z", "#555", 1) + dot(3, 12) + dot(15, 18) + star(5, 5),
  combine: combineLines + shape("M11 8H19V13H11Z", "#4c84d8", "#2a50a0"),
  nodeLoad: star(4, 4) + arrowDown(12, 12) + dot(12, 17),
  memberLoad: line("M2 16H18M4 5H17M5 5V14M10 5V14M16 5V14", "#3050b0", 2) + shape("M2 11H8L5 15ZM7 11H13L10 15ZM13 11H19L16 15Z", "#5c84dc") + dot(2, 17) + dot(18, 17) + star(4, 4),
  lineLoad: line("M2 16H18M4 7H17M5 7V14M10 4V14M16 7V14", "#3050b0", 2) + shape("M2 11H8L5 15ZM7 11H13L10 15ZM13 11H19L16 15Z", "#5c84dc") + dot(2, 17) + dot(18, 17) + star(4, 4),
  areaLoad: `<g opacity=".5">${shape("M4 2H18V12L14 19H3Z", "#88c0e8", "#37568f")}${line("M8 4V14M13 4V14", "#2a50a0", 2)}${star(4, 4)}</g>`,
  freeLoad: shape("M6 14 12 10 18 13V17L11 19 6 17Z", "#7c9cc8", "#1c3058") + arrowDown(12, 12) + star(4, 4),
  handMove: hand + shape("M4 9 12 7 16 14 10 19Z", "#999", "#444") + line("M14 1V13M8 7H19", "#333"),
  zoomWindow: shape("M9 3H19V12H9Z", "none", "#333") + dot(18, 3) + lens,
  zoomOff: lens + cross(14, 6),
  wireBox: line("M2 6 7 1H18V14L13 19H2ZM2 6H13V19M13 6 18 1M7 1V14H18M7 14 2 19", "#6474a4", 1.5),
  boxes: `<g fill="#c8d4f0" stroke="#6474a4"><path d="M9 2 12 0H19V8L17 10H9Z"/><path d="M5 6 8 4H15V12L13 14H5Z"/><path d="M1 11 4 9H11V17L9 19H1Z"/></g>`,
  viewX: view("X", "#18b838", "#2050e0", 4, 9),
  viewY: view("Y", "#e02040", "#2050e0", 16, 3),
  viewZ: view("Z", "#e02040", "#18b838", 4, 10),
  viewMinusX: view("-X", "#18b838", "#2050e0", 16, 1) + ring(16, 3, 2, "#d01818", 2),
  microscope: line("M17 3 9 11M6 18H18M14 8Q19 13 13 18", "#333", 3) + cross(4, 5, "#4ca0e8") + line("M4 0V10M0 5H9", "#4ca0e8", 1),
  render: shape("M2 5 8 2 11 4V9L17 7 19 12 10 19 2 14Z", "#7c94ac", "#44586c") + line("M2 5 7 8V16M11 9 7 12M17 7 13 10", "#c8d4e0", 1),
  deformed: line("M3 18 5 4Q8 1 10 5T15 3L18 18", "#333", 1.5) + dot(5, 4) + dot(16, 3) + dot(3, 18, "#18a030") + dot(17, 18, "#18a030"),
  print3d: shape("M1 6H16L19 9V14H6V10H1Z", "#cfd2da", "#8a8e98") + line("M9 9H12M9 11H12M14 10H16", "#777", 1),
  sectionResult: at(0, -1, ibeam) + at(0, 2, slope),
  surfaceResult: shape("M1 8Q8 2 18 6L14 16Q6 18 1 8Z", "#48c8a0", "#7c9c9c") + shape("M4 8Q9 5 14 8L11 12Z", "#f0e040") + shape("M12 12 17 8 14 15Z", "#4864e8"),
  solidResult: shape("M2 5 7 1H18V14L13 19H2Z", "#58d8b0", "#547890") + ring(8, 12, 4, "#f0e030", 2, "#e06830") + ring(15, 8, 2, "#4870e0", 2),
  supportForce: shape("M5 3 8 1 11 3 13 9H3Z", "#1c9c40", "#0c5c24") + line("M8 19V12M5 15 8 12 11 15M19 4H13M15 1 12 4 15 7", "#18a030", 2),
  sectionCut: shape("M3 11 15 2 18 3 8 12Z", "#c8d8ec", "#7c90a8") + `<g opacity=".5">${at(0, 2, slope)}</g>`,
  pickValue: line("M1 7 8 12M8 4 3 12", "#c02828", 2) + shape("M11 1H19V7H11Z", "#f4e048", "#85781c") + pointer(6, 8),
  momentLine: `<g opacity=".6">${at(1, 0, ibeam)}${line("M1 14H19", "#36c")}${line("M1 15Q6 22 10 15T19 14", "#e04040")}</g>`,
  valueTable: shape("M1 1H19V19H1Z", "#5c6cb8", "#222") + line("M1 5H19M1 9H19M1 13H19M1 17H19", "#dde", 2) + line("M10 1V19", "#222", 2) + line("M3 5H8M12 9H17M3 13H8", "#e04040", 1),
  legend: shape("M3 2H17V19H3Z", "#eee", "#444") + shape("M3 2H17V5H3Z", "#556") + shape("M5 7H9V10H5Z", "#e03030") + shape("M5 10H9V13H5Z", "#e8e030") + shape("M5 13H9V17H5Z", "#30b050") + line("M11 8H15M11 11H15M11 14H15", "#555", 1),
  wizard: line("M8 18 17 9", "#6c8cc0", 4) + line("M11 2 17 6M17 1 12 7", "#d04040", 1.5) + star(5, 6) + pointer(13, 7),
  colors: shape("M1 1H19V19H1Z", "#f8f0e0", "#8c8c8c") + shape("M1 1H6L19 17V19H15L1 5Z", "#e02020") + shape("M1 5 13 19H8L1 11Z", "#f0e020") + shape("M1 11 8 19H1Z", "#20a040") + line("M9 9 17 2", "#7c5a30", 2),

  gridEdit: gridTop + shape("M3 17 16 4V17Z", "#6cd46c", "#1c7c1c"),
  gridLoad: gridTop + line("M7 7V16M4 13 7 16 10 13M10 12H18M14 8V16", "#1c3c98", 2),
  gridDown: gridTop + at(2, 0, arrowDown(8, 17)),
  gridResult: gridTop + at(0, 1, slope),
  gridWave: `<g opacity=".5">${gridTop}${line("M1 11 4 7 6 15 9 6 11 16 14 8 16 13 19 9", "#e03030")}</g>`,
  gridLeft: grid + shape("M3 9 9 4V7H17V12H9V15Z", "#5c88e8", "#1c3c98"),
  gridRight: grid + shape("M17 9 11 4V7H3V12H11V15Z", "#5c88e8", "#1c3c98"),
  jumpDown: shape("M8 1H14V6H8Z", "#fff", "#555") + line("M10 4Q20 8 14 17M10 18H15", "#34446c", 3),
  jumpUp: shape("M9 1H15V6H9Z", "#fff", "#555") + line("M11 4Q1 6 7 17M7 17 13 18", "#34446c", 3),
  refresh: line("M8 2Q0 9 7 17M12 18Q20 11 13 3", "#9cacc8", 3) + shape("M6 0H12L8 6ZM8 20H14L12 14Z", "#9cacc8"),
  gridPlus: gridFaded + line("M10 4V16M4 10H16", "#7c98e0", 4),
  gridTimes: gridFaded + cross(10, 10, "#7c98e0"),
  gridDots: gridFaded + ring(10, 6, 2, "#7c98e0", 2) + ring(10, 14, 2, "#7c98e0", 2),
  gridX: gridFaded + line("M5 4 15 16M15 4 5 16", "#7c90b8", 2),
  rowDelete: rows + cross(13, 10),
  rowInsert: shape("M4 2H9V6H4ZM4 14H9V18H4ZM13 8H19V12H13Z", "#c8c8c8", "#999") + line("M1 10H11M4 7 1 10 4 13", "#d02828", 2),
  rowOut: rows + line("M9 10H18M15 7 18 10 15 13", "#d02828", 2),
  gridYellow: shape("M1 1H19V19H1Z", "#fff", "#555") + shape("M1 1H19V9H1Z", "#e4dc50") + line("M1 5H19M7 1V9M13 1V9", "#8c8430", 1),
  gridBlue: `<g opacity=".8">${shape("M1 1H19V19H1Z", "#e4e6f8", "#889")}${line("M2 5H18M2 9H18M2 13H18M2 17H18", "#8080d0", 3)}${line("M7 1V19M13 1V19", "#fff", 1)}</g>`,
  gridNote: `<g opacity=".8">${shape("M1 1H19V19H1Z", "#f0eecc", "#999")}${line("M1 7H19M1 13H19M7 1V19M13 1V19", "#ccc890", 1)}${line("M14 2 11 12 7 15", "#d8b830", 3)}</g>`,
  handList: shape("M3 6H19V19H3Z", "#fff", "#555") + line("M5 10H8M5 13H8M5 16H8M10 10H17M10 13H17M10 16H17", "#666", 1) + hand,
  excel: shape("M1 1H19V19H1Z", "#fff", "#1e7a34") + line("M1 1H19V19H1Z", "#1e7a34", 2) + line("M5 5 15 15M15 5 5 15", "#1e7a34", 3),
  calculator: shape("M1 3H19V17H1Z", "#aaa", "#444") + shape("M3 5H17V8H3Z", "#333") + line("M3 11H17M3 14H17", "#fff", "2\" stroke-dasharray=\"2 1"),
  abWindow: shape("M7 1H19V9H7Z", "#fff", "#555") + shape("M7 1H19V4H7Z", "#4468c0") + text(1, 18, "ab=", 10, "#222", 'font-style="italic"'),
  fx: text(3, 14, "fx", 15, "#777", 'font-style="italic"'),
  fxDelete: text(6, 16, "fx", 13, "#888", 'font-style="italic"') + `<g opacity=".7">${cross(5, 5)}</g>`,
  lock: line("M5 10V6Q6 2 9 2T13 6", "#98a4bc", 2) + shape("M4 10H17V19H4Z", "#a8bcf0", "#7c90c8"),

  tabData: shape("M1 3H7L9 5H17V13H1Z", "#f0c030", "#a07c10") + shape("M8 1H19V7H8Z", "#fff", "#4c80d0") + ring(11, 11, 4, "#3c5890", 2, "#d0e4f8") + line("M14 14 18 18", "#3c5890", 3),
  tabDisplay: shape("M2 4H16V19H2Z", "#e4eeff", "#2a58b8") + line("M5 10H14M5 13H14M5 16H14", "#2a58b8", 1) + hand,
  tabViews: line("M14 2 7 10M2 17H18M12 8Q17 12 12 16", "#3458b0", 3),
  tabResults: shape("M1 6 9 2 19 6 9 11Z", "#2038d0") + shape("M2 8 9 4 18 8 9 13Z", "#20c8b0") + shape("M4 11 9 7 16 10 9 15Z", "#f0e020") + shape("M6 13 9 11 13 13 9 17Z", "#e02020"),
  help: ring(10, 9, 8, "#888", 1, "#f4f4f4") + shape("M5 15 3 19 10 17Z", "#ccc", "#888") + text(6, 15, "?", 16, "#34508c"),
  menuEdit: shape("M1 5H19V19H1Z", "#ddd", "#777") + line("M10 10H17M10 13H17M10 16H17", "#888", 1) + hand + arrowDown(6, 18),
  menuTable: base + shape("M8 1H19V9H8Z", "#fff", "#777") + line("M8 5H19M12 1V9M16 1V9", "#777", 1) + arrowDown(5, 17),
  menuCopy: base + shape("M8 1H14V12H8Z", "#f4f0e4", "#888") + shape("M12 3H19V14H12Z", "#fbf8f0", "#888") + arrowDown(5, 17),
  menuAdd: base + line("M13 1V11M8 6H18", "#2a50b8", 5) + line("M13 2V10M9 6H17", "#7c9cf0", 3) + arrowDown(5, 17),
  menuDelete: base + cross(14, 5, "#c82c3c") + arrowDown(5, 17)
};

// Tree icons are drawn in the same 20 unit box
const folder = shape("M3 3H8L10 5H17V16H3Z", "#c8a010", "#8c7428") + shape("M3 6H17V16H3Z", "#f0d23c", "#a48a24") + line("M4 7H16", "#fbf0a0", 1);
const folderMarks = {
  plain: "",
  hinge: line("M7 8V13", "#843", 1) + ring(8, 10, 1, "#a33", 1) + line("M9 10H14", "#555", 1),
  ecc: line("M6 13 12 8M8 14 14 9", "#778", 1.5) + mark(13, 8),
  div: line("M6 14 15 7", "#444", 1.5) + line("M9 9 12 12", "#444", 1),
  member: line("M6 14 14 8", "#667", 1.5) + mark(15, 7) + mark(6, 14),
  rib: `<ellipse cx="10" cy="10" rx="4" ry="2" fill="#ccc" stroke="#888"/>`,
  elastic: line("M6 9H14", "#c22", 2) + line("M7 13V10M10 14V10M13 13V10", "#183", 2),
  nonlinear: line("M10 7V14", "#556", 1.5) + mark(10, 7) + mark(10, 14),
  set: line("M6 14 11 8 14 13M6 9 14 14", "#b33", 1),
  intersect: ring(10, 10, 2, "#2c5ca0", 2, "#9cc4f0"),
  mesh: shape("M6 7H14V14H6Z", "#8aa4c4", "#345") + line("M9 7V14M12 7V14M6 10H14", "#345", 1),
  lineRelease: shape("M6 8H14V13H6Z", "#eef2f8", "#9ab") + line("M7 12 13 9", "#468", 1),
  surface: shape("M4 10 8 6 16 7 13 13Z", "#7cb4e8", "#346"),
  constraint: line("M6 7 14 14M14 7 6 14", "#922", 1.5) + mark(6, 7) + mark(14, 7) + mark(6, 14) + mark(14, 14)
};
const treeIcons = {
  openFolder: shape("M4 4H9L11 6H18V15H4Z", "#b89818", "#705c14") + shape("M1 7H14L18 16H5Z", "#d8bc34", "#80691c"),
  load: line("M1 16.500H17", "#555", 2) + at(12, 15, shape("M-1.500-9H1.500V-4H3L0 1-3-4H-1.500Z", "#4c78d0", "#1c3f94")),
  combo: combineLines + shape("M13 8H19V13H13Z", "#20b040", "#0c6c20"),
  result: combineLines + shape("M13 8H19V13H13Z", "#4c88e0", "#1c4890"),
  modSurface: shape("M2 2H17V17H2Z", "#fff") + line("M2 3H17V17H2Z", "#8080f8", 2) + shape("M4 12 8 7H15L12 13Z", "#20a090", "#345") + shape("M6 10H12L10 12H5Z", "#e8e030"),
  modMember: shape("M2 2H17V17H2Z", "#eef") + line("M2 3H17V17H2Z", "#8080f8", 2) + line("M5 7H11M5 13H11M8 7V13", "#444", 2) + shape("M11 7 15 6V12L11 14Z", "#999"),
  modEc3: shape("M2 2H17V17H2Z", "#eef") + line("M2 3H17V17H2Z", "#8080f8", 2) + line("M5 6 14 8M5 10H14M6 14 14 12", "#556", 2)
};

// guides per row: "|" line, "T" branch, "L" last branch, "+" / "-" expander
const treeRows = [
  ["|T", "hinge", "Member Hinges"],
  ["|T", "ecc", "Member Eccentricities"],
  ["|T", "div", "Member Divisions"],
  ["|+", "member", "Members"],
  ["|T", "rib", "Ribs"],
  ["|T", "elastic", "Member Elastic Foundations"],
  ["|T", "nonlinear", "Member Nonlinearities"],
  ["|T", "set", "Sets of Members"],
  ["|T", "intersect", "Intersections of Surfaces"],
  ["|T", "mesh", "FE Mesh Refinements"],
  ["|T", "plain", "Nodal Releases"],
  ["|T", "plain", "Line Release Types"],
  ["|T", "lineRelease", "Line Releases"],
  ["|T", "surface", "Surface Release Types"],
  ["|T", "surface", "Surface Releases"],
  ["|T", "plain", "Connection of Two Members"],
  ["|T", "plain", "Joints"],
  ["|L", "constraint", "Nodal Constraints"],
  ["-", "openFolder", "Load Cases and Combinations"],
  ["|-", "load", "Load Cases"],
  ["||T", "plain", "LC1: Self-weight"],
  ["||T", "plain", "LC2: in X", true],
  ["||T", "plain", "LC3: in Y"],
  ["||L", "plain", "LC4: in X"],
  ["|+", "combo", "Load Combinations"],
  ["|L", "result", "Result Combinations"],
  ["+", "plain", "Loads"],
  ["+", "plain", "Results"],
  ["T", "plain", "Sections"],
  ["T", "plain", "Average Regions"],
  ["T", "plain", "Printout Reports"],
  ["+", "plain", "Guide Objects"],
  ["-", "openFolder", "Add-on Modules"],
  ["|T", "modSurface", "RF-STEEL Surfaces - General stress analysis of"],
  ["|T", "modMember", "RF-STEEL Members - General stress analysis"],
  ["|T", "modEc3", "RF-STEEL EC3 - Design of steel members acc"]
];

function svg(body, size = 20) {
  return `<svg width="${size}" height="${size}" viewBox="0 0 20 20" aria-hidden="true">${body}</svg>`;
}

function guide(kind) {
  const dots = d => `<path d="${d}" stroke="#777" stroke-dasharray="1 1"/>`;
  let body = kind === "L" ? dots("M9.500 0V11") : dots("M9.500 0V22");
  if (kind !== "|") body += dots("M10 11.500H19");
  if (kind === "+" || kind === "-") {
    body += '<rect x="4.500" y="6.500" width="10" height="10" fill="#fff" stroke="#8c8c8c"/><path d="M7 11.500H12" stroke="#2a4a9c"/>';
    if (kind === "+") body += '<path d="M9.500 9V14" stroke="#2a4a9c"/>';
  }
  return `<svg width="19" height="22" aria-hidden="true">${body}</svg>`;
}

document.getElementById("tree").innerHTML = treeRows.map(([guides, icon, label, selected]) => {
  const picture = treeIcons[icon] || folder + folderMarks[icon];
  return `<li>${[...guides].map(guide).join("")}${svg(picture, 19)}<span class="label${selected ? " selected" : ""}">${label}</span></li>`;
}).join("");

document.querySelectorAll("[data-icon]").forEach(el => {
  el.innerHTML = svg(icons[el.dataset.icon]);
});

document.querySelectorAll("[data-buttons]").forEach(bar => {
  const html = bar.dataset.buttons.split(" ").map(item => {
    if (item === "|") return '<i class="separator"></i>';
    const name = item.replace(/^[*+]/, "");
    const pressed = item[0] === "*" ? " pressed" : "";
    const drop = item[0] === "+" ? `<button class="drop" aria-label="${name} options"><svg width="7" height="4"><path d="M0 0H7L3.500 4Z" fill="#777"/></svg></button>` : "";
    return `<button class="tool${pressed}" aria-label="${name}">${svg(icons[name])}</button>${drop}`;
  }).join("");
  const grip = bar.classList.contains("toolbar") ? '<i class="grip"></i>' : "";
  bar.insertAdjacentHTML("afterbegin", grip + html);
});
```
